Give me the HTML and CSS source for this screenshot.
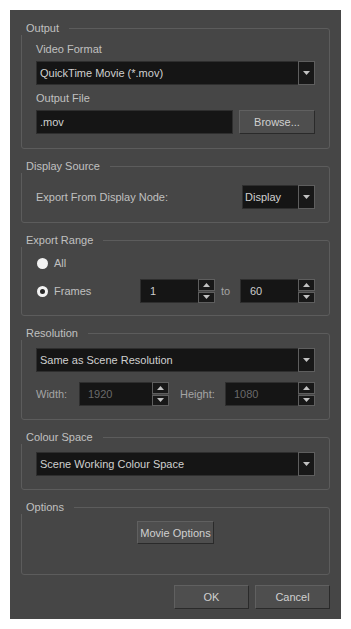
FILE: index.html
```html
<!DOCTYPE html>
<html lang="en">
<head>
  <meta charset="UTF-8">
  <meta name="viewport" content="width=device-width, initial-scale=1.0">
  <title>Export to QuickTime Movie</title>
  <link rel="stylesheet" href="styles.css">
</head>
<body>
  <div class="dialog">
    <fieldset class="group group-output">
      <legend>Output</legend>
      <div class="field-label">Video Format</div>
      <div class="combo">
        <span class="combo-text">QuickTime Movie (*.mov)</span>
        <span class="combo-btn">
          <svg width="7" height="4" viewBox="0 0 7 4"><path d="M0 0h7L3.5 4z" fill="#c2c2c2"/></svg>
        </span>
      </div>
      <div class="field-label field-label-second">Output File</div>
      <div class="row">
        <div class="text-input">.mov</div>
        <button class="btn btn-browse">Browse...</button>
      </div>
    </fieldset>

    <fieldset class="group group-display">
      <legend>Display Source</legend>
      <div class="row row-between">
        <span class="label">Export From Display Node:</span>
        <div class="combo combo-small">
          <span class="combo-text">Display</span>
          <span class="combo-btn">
            <svg width="7" height="4" viewBox="0 0 7 4"><path d="M0 0h7L3.5 4z" fill="#c2c2c2"/></svg>
          </span>
        </div>
      </div>
    </fieldset>

    <fieldset class="group group-range">
      <legend>Export Range</legend>
      <div class="radio-row">
        <span class="radio"></span>
        <span class="label">All</span>
      </div>
      <div class="radio-row radio-row-frames">
        <span class="radio radio-on"></span>
        <span class="label label-frames">Frames</span>
        <div class="spin spin-frame">
          <span class="spin-text">1</span>
          <span class="spin-btns">
            <span class="spin-btn"><svg width="7" height="4" viewBox="0 0 7 4"><path d="M0 4h7L3.5 0z" fill="#c2c2c2"/></svg></span>
            <span class="spin-btn"><svg width="7" height="4" viewBox="0 0 7 4"><path d="M0 0h7L3.5 4z" fill="#c2c2c2"/></svg></span>
          </span>
        </div>
        <span class="label label-dim label-to">to</span>
        <div class="spin spin-frame">
          <span class="spin-text">60</span>
          <span class="spin-btns">
            <span class="spin-btn"><svg width="7" height="4" viewBox="0 0 7 4"><path d="M0 4h7L3.5 0z" fill="#c2c2c2"/></svg></span>
            <span class="spin-btn"><svg width="7" height="4" viewBox="0 0 7 4"><path d="M0 0h7L3.5 4z" fill="#c2c2c2"/></svg></span>
          </span>
        </div>
      </div>
    </fieldset>

    <fieldset class="group group-res">
      <legend>Resolution</legend>
      <div class="combo">
        <span class="combo-text">Same as Scene Resolution</span>
        <span class="combo-btn">
          <svg width="7" height="4" viewBox="0 0 7 4"><path d="M0 0h7L3.5 4z" fill="#c2c2c2"/></svg>
        </span>
      </div>
      <div class="row row-size">
        <span class="label label-dim label-width">Width:</span>
        <div class="spin spin-size">
          <span class="spin-text spin-text-off">1920</span>
          <span class="spin-btns">
            <span class="spin-btn"><svg width="7" height="4" viewBox="0 0 7 4"><path d="M0 4h7L3.5 0z" fill="#c2c2c2"/></svg></span>
            <span class="spin-btn"><svg width="7" height="4" viewBox="0 0 7 4"><path d="M0 0h7L3.5 4z" fill="#c2c2c2"/></svg></span>
          </span>
        </div>
        <span class="label label-dim label-height">Height:</span>
        <div class="spin spin-size">
          <span class="spin-text spin-text-off">1080</span>
          <span class="spin-btns">
            <span class="spin-btn"><svg width="7" height="4" viewBox="0 0 7 4"><path d="M0 4h7L3.5 0z" fill="#c2c2c2"/></svg></span>
            <span class="spin-btn"><svg width="7" height="4" viewBox="0 0 7 4"><path d="M0 0h7L3.5 4z" fill="#c2c2c2"/></svg></span>
          </span>
        </div>
      </div>
    </fieldset>

    <fieldset class="group group-colour">
      <legend>Colour Space</legend>
      <div class="combo">
        <span class="combo-text">Scene Working Colour Space</span>
        <span class="combo-btn">
          <svg width="7" height="4" viewBox="0 0 7 4"><path d="M0 0h7L3.5 4z" fill="#c2c2c2"/></svg>
        </span>
      </div>
    </fieldset>

    <fieldset class="group group-options">
      <legend>Options</legend>
      <div class="row row-center">
        <button class="btn btn-movie">Movie Options</button>
      </div>
    </fieldset>

    <div class="footer">
      <button class="btn btn-footer">OK</button>
      <button class="btn btn-footer">Cancel</button>
    </div>
  </div>
</body>
</html>
```

FILE: styles.css
```css
body {
  margin: 0;
  padding: 10px;
  background: #ffffff;
  font-family: 'Liberation Sans', Arial, sans-serif;
  font-size: 11px;
  color: #c0c0c0;
}
.dialog {
  width: 331px;
  box-sizing: border-box;
  background: #464646;
  padding: 11px 11px 10px;
  display: flex;
  flex-direction: column;
  gap: 10px;
}
.group {
  margin: 0;
  min-width: 0;
  border: 1px solid #5c5c5c;
  border-radius: 3px;
  padding: 0 14px;
}
.group legend {
  margin-left: -15px;
  padding: 0 10px 0 5px;
  line-height: 14px;
  color: #c0c0c0;
}
.group-output {
  padding-top: 6px;
  padding-bottom: 14px;
}
.group-display {
  padding-top: 12px;
  padding-bottom: 13px;
}
.group-range {
  padding-top: 6px;
  padding-bottom: 12px;
}
.group-res {
  padding-top: 8px;
  padding-bottom: 13px;
}
.group-colour {
  padding-top: 8px;
  padding-bottom: 13px;
}
.group-options {
  padding-top: 7px;
  padding-bottom: 30px;
}
.field-label {
  line-height: 16px;
  margin-bottom: 4px;
}
.field-label-second {
  margin-top: 5px;
}
.row {
  display: flex;
  align-items: center;
}
.row-between {
  justify-content: space-between;
}
.row-center {
  justify-content: center;
}
.combo {
  display: flex;
  height: 24px;
  background: #151515;
}
.combo-text {
  flex: 1;
  display: flex;
  align-items: center;
  padding-left: 3px;
  color: #d0d0d0;
  border: 1px solid #2e2e2e;
  border-right: none;
}
.combo-btn {
  width: 17px;
  box-sizing: border-box;
  display: flex;
  align-items: center;
  justify-content: center;
  border: 1px solid #5e5e5e;
  background: #181818;
}
.combo-small {
  width: 73px;
}
.combo-small .combo-text {
  padding-left: 2px;
}
.text-input {
  flex: 1;
  height: 24px;
  box-sizing: border-box;
  display: flex;
  align-items: center;
  padding-left: 3px;
  background: #151515;
  border: 1px solid #2e2e2e;
  color: #d0d0d0;
}
.btn {
  font-family: inherit;
  font-size: 11px;
  color: #d0d0d0;
  background: #4e4e4e;
  border: 1px solid;
  border-color: #606060 #2a2a2a #2a2a2a #606060;
  height: 24px;
  padding: 0;
}
.btn-browse {
  width: 76px;
  margin-left: 6px;
}
.btn-movie {
  width: 77px;
  height: 23px;
}
.radio-row {
  display: flex;
  align-items: center;
  height: 20px;
  padding-left: 1px;
}
.radio-row-frames {
  height: 24px;
  margin-top: 6px;
}
.radio {
  width: 11px;
  height: 11px;
  box-sizing: border-box;
  border-radius: 50%;
  background: #f2f2f2;
  margin-right: 6px;
}
.radio-on {
  border: 3px solid #f2f2f2;
  background: #262626;
}
.label-frames {
  width: 86px;
}
.label-dim {
  color: #a4a4a4;
}
.label-to {
  width: 25px;
  box-sizing: border-box;
  padding-left: 6px;
}
.spin {
  display: flex;
  height: 24px;
}
.spin-frame {
  width: 75px;
}
.spin-size {
  width: 90px;
}
.spin-text {
  flex: 1;
  display: flex;
  align-items: center;
  padding-left: 9px;
  background: #151515;
  border: 1px solid #2e2e2e;
  border-right: none;
  color: #cccccc;
}
.spin-text-off {
  padding-left: 8px;
  color: #6a6a6a;
}
.spin-btns {
  width: 17px;
  display: flex;
  flex-direction: column;
  gap: 1px;
  background: #464646;
}
.spin-btn {
  flex: 1;
  box-sizing: border-box;
  display: flex;
  align-items: center;
  justify-content: center;
  border: 1px solid #5e5e5e;
  background: #181818;
}
.row-size {
  margin-top: 10px;
}
.label-width {
  width: 43px;
}
.label-height {
  width: 45px;
  margin-left: 11px;
}
.footer {
  display: flex;
  justify-content: flex-end;
  gap: 6px;
}
.btn-footer {
  width: 75px;
}
```
